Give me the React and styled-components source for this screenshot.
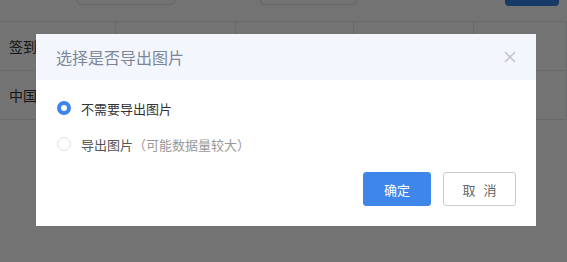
import styled, { createGlobalStyle } from "styled-components";

const GlobalStyle = createGlobalStyle`
  html, body {
    margin: 0;
    padding: 0;
    background: #fff;
  }
  body {
    font-family: "Noto Sans CJK SC", "Noto Sans", sans-serif;
  }
`;

const rows = [
  { id: 1, cells: ["签到地点", "", "", "", ""] },
  { id: 2, cells: ["中国江苏", "", "", "", ""] },
];

const colWidths = [116, 120, 118, 120, 93];

const Page = styled.div`
  position: relative;
  width: 567px;
  height: 262px;
  overflow: hidden;
  background: #fff;
`;

const Toolbar = styled.div`
  display: flex;
  align-items: flex-end;
  height: 21px;
  box-sizing: border-box;
  overflow: hidden;
`;

const FakeInput = styled.div`
  flex: none;
  width: ${(p) => p.$w}px;
  height: 32px;
  margin-left: ${(p) => p.$ml}px;
  margin-bottom: 16px;
  border: 1px solid #dcdfe6;
  border-radius: 4px;
  box-sizing: border-box;
`;

const SearchButton = styled.div`
  flex: none;
  width: 54px;
  height: 32px;
  margin-left: auto;
  margin-right: 8px;
  margin-bottom: 15px;
  border-radius: 4px;
  background: #3580e4;
`;

const Table = styled.div`
  border-top: 1px solid #e6e9ef;
`;

const Row = styled.div`
  display: flex;
  height: 49px;
  border-bottom: 1px solid #e6e9ef;
  box-sizing: border-box;
`;

const Cell = styled.div`
  flex: none;
  display: flex;
  align-items: center;
  padding-left: 9px;
  box-sizing: border-box;
  border-right: 1px solid #e6e9ef;
  font-size: 14px;
  color: #333;
  white-space: nowrap;
  overflow: hidden;
`;

const Mask = styled.div`
  position: absolute;
  inset: 0;
  background: rgba(0, 0, 0, 0.55);
  display: flex;
  align-items: flex-start;
  padding: 34px 0 0 36px;
`;

const Dialog = styled.div`
  width: 500px;
  background: #fff;
  display: flex;
  flex-direction: column;
`;

const Header = styled.div`
  height: 46px;
  padding: 0 20px;
  display: flex;
  align-items: center;
  justify-content: space-between;
  background: #f3f6fd;
`;

const Title = styled.div`
  font-size: 16px;
  color: #7c869a;
`;

const Close = styled.svg`
  width: 12px;
  height: 12px;
  display: block;
`;

const Body = styled.div`
  padding: 18px 21px 0;
  display: flex;
  flex-direction: column;
  gap: 16px;
`;

const Option = styled.label`
  display: flex;
  align-items: center;
  height: 20px;
  gap: 10px;
  font-size: 13px;
  color: ${(p) => (p.$checked ? "#333" : "#555")};
`;

const Radio = styled.span`
  flex: none;
  width: 14px;
  height: 14px;
  border-radius: 50%;
  box-sizing: border-box;
  background: #fff;
  border: ${(p) => (p.$checked ? "4px solid #3d85ea" : "1px solid #dcdfe6")};
`;

const Hint = styled.span`
  color: #999;
`;

const Footer = styled.div`
  display: flex;
  justify-content: flex-end;
  gap: 12px;
  padding: 18px 20px 20px;
`;

const Button = styled.button`
  height: 34px;
  width: ${(p) => (p.$primary ? 68 : 73)}px;
  border-radius: 3px;
  font-family: inherit;
  font-size: 13px;
  word-spacing: 5px;
  box-sizing: border-box;
  padding: 0;
  background: ${(p) => (p.$primary ? "#3f86ea" : "#fff")};
  color: ${(p) => (p.$primary ? "#fff" : "#666")};
  border: 1px solid ${(p) => (p.$primary ? "#3f86ea" : "#ccc")};
`;

export default function App() {
  return (
    <>
      <GlobalStyle />
      <Page>
        <Toolbar>
          <FakeInput $w={98} $ml={77} />
          <FakeInput $w={97} $ml={85} />
          <SearchButton />
        </Toolbar>
        <Table>
          {rows.map((row) => (
            <Row key={row.id}>
              {row.cells.map((c, i) => (
                <Cell key={i} style={{ width: colWidths[i] }}>
                  {c}
                </Cell>
              ))}
            </Row>
          ))}
        </Table>
        <Mask>
          <Dialog>
            <Header>
              <Title>选择是否导出图片</Title>
              <Close viewBox="0 0 12 12">
                <path
                  d="M1 1L11 11M11 1L1 11"
                  stroke="#c6c6c6"
                  strokeWidth="1.6"
                  fill="none"
                />
              </Close>
            </Header>
            <Body>
              <Option $checked>
                <Radio $checked />
                不需要导出图片
              </Option>
              <Option>
                <Radio />
                <span>
                  导出图片<Hint>（可能数据量较大）</Hint>
                </span>
              </Option>
            </Body>
            <Footer>
              <Button $primary>确定</Button>
              <Button>取 消</Button>
            </Footer>
          </Dialog>
        </Mask>
      </Page>
    </>
  );
}
